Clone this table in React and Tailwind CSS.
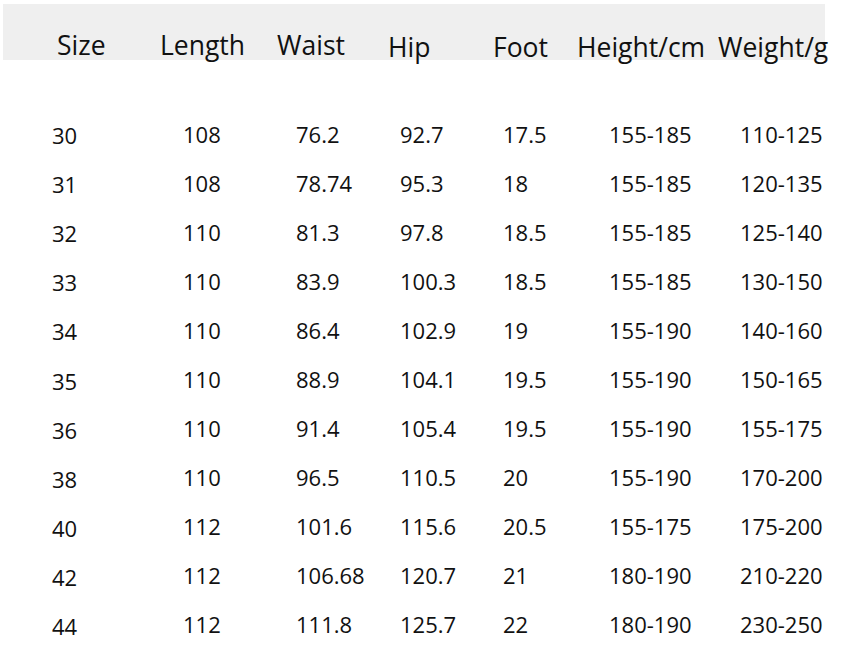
const headers = [
  { label: 'Size', w: 'w-[103px]', off: 'pt-0' },
  { label: 'Length', w: 'w-[117px]', off: 'pt-0' },
  { label: 'Waist', w: 'w-[111px]', off: 'pt-0' },
  { label: 'Hip', w: 'w-[105px]', off: 'pt-[2px]' },
  { label: 'Foot', w: 'w-[84px]', off: 'pt-[2px]' },
  { label: 'Height/cm', w: 'w-[141px]', off: 'pt-[2px]' },
  { label: 'Weight/g', w: 'w-[130px]', off: 'pt-[2px]' },
];

const rows = [
  ['30', '108', '76.2', '92.7', '17.5', '155-185', '110-125'],
  ['31', '108', '78.74', '95.3', '18', '155-185', '120-135'],
  ['32', '110', '81.3', '97.8', '18.5', '155-185', '125-140'],
  ['33', '110', '83.9', '100.3', '18.5', '155-185', '130-150'],
  ['34', '110', '86.4', '102.9', '19', '155-190', '140-160'],
  ['35', '110', '88.9', '104.1', '19.5', '155-190', '150-165'],
  ['36', '110', '91.4', '105.4', '19.5', '155-190', '155-175'],
  ['38', '110', '96.5', '110.5', '20', '155-190', '170-200'],
  ['40', '112', '101.6', '115.6', '20.5', '155-175', '175-200'],
  ['42', '112', '106.68', '120.7', '21', '180-190', '210-220'],
  ['44', '112', '111.8', '125.7', '22', '180-190', '230-250'],
];

const App = () => {
  return (
    <div
      className="w-[841px] h-[645px] bg-white overflow-hidden text-[#111]"
      style={{ fontFamily: '"Open Sans", "Noto Sans", sans-serif' }}
    >
      {/* Header */}
      <div className="pt-[4px] pl-[3px]">
        <div className="w-[822px] h-[56px] bg-[#efefef] flex pl-[54px] whitespace-nowrap">
          {headers.map(h => (
            <div key={h.label} className={`${h.w} shrink-0 ${h.off}`}>
              <span className="block mt-[25px] text-[26.5px] leading-[32px]">{h.label}</span>
            </div>
          ))}
        </div>
      </div>

      {/* Rows */}
      <div className="mt-[49px] pl-[52px]">
        {rows.map(r => (
          <div
            key={r[0]}
            className="h-[49.1px] grid grid-cols-[131px_113px_104px_103px_106px_131px_100px] items-center text-[22px] leading-none"
          >
            <span className="pt-[3px]">{r[0]}</span>
            {r.slice(1).map((v, i) => (
              <span key={i}>{v}</span>
            ))}
          </div>
        ))}
      </div>
    </div>
  );
};

export default App;
